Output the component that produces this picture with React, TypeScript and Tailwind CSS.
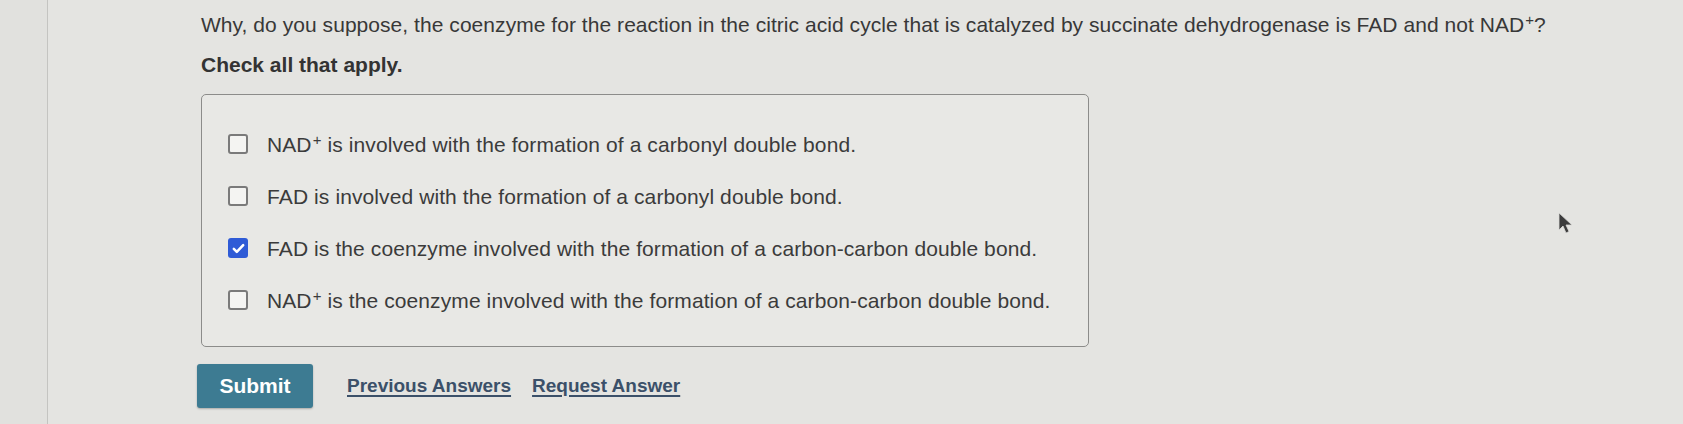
const font = { fontFamily: '"Liberation Sans", Arial, sans-serif' }

const options = [
  { id: 1, nad: true, text: ' is involved with the formation of a carbonyl double bond.', checked: false },
  { id: 2, nad: false, text: 'FAD is involved with the formation of a carbonyl double bond.', checked: false },
  { id: 3, nad: false, text: 'FAD is the coenzyme involved with the formation of a carbon-carbon double bond.', checked: true },
  { id: 4, nad: true, text: ' is the coenzyme involved with the formation of a carbon-carbon double bond.', checked: false }
]

function Nad() {
  return (
    <>
      NAD<sup className="ml-[1px] text-[15px]">+</sup>
    </>
  )
}

function Checkbox({ checked }: { checked: boolean }) {
  if (checked) {
    return (
      <span className="mt-[1px] flex size-[20px] shrink-0 items-center justify-center rounded-[3px] bg-[#2f5bd6]">
        <svg viewBox="0 0 20 20" className="size-[17px]" fill="none">
          <path d="M4.5 10.5l3.5 3.5 7.5-8" stroke="white" strokeWidth="3" strokeLinecap="round" strokeLinejoin="round" />
        </svg>
      </span>
    )
  }
  return <span className="mt-[1px] block size-[20px] shrink-0 rounded-[3px] border-2 border-[#7a7a7a] bg-[#f4f4f2]" />
}

export default function App() {
  return (
    <div className="relative flex h-[424px] w-[1683px] overflow-hidden bg-[#e4e4e1] text-[#383838]" style={font}>
      <div className="w-[48px] shrink-0 border-r border-[#c4c4c1] bg-[#e1e1de]" />

      <div className="flex flex-col pl-[153px] pt-[13px]">
        <p className="text-[21px] leading-[24px] tracking-[0.05px]">
          Why, do you suppose, the coenzyme for the reaction in the citric acid cycle that is catalyzed by succinate
          dehydrogenase is FAD and not <Nad />?
        </p>
        <p className="mt-[16px] text-[21px] font-bold leading-[24px] text-[#333]">Check all that apply.</p>

        <div className="mt-[17px] flex w-[888px] flex-col gap-[28px] rounded-[5px] border border-[#8c8c8a] bg-[#e8e8e5] pb-[33px] pl-[26px] pt-[38px]">
          {options.map((item) => (
            <label key={item.id} className="flex items-start gap-[19px] text-[21px] leading-[24px] tracking-[0.1px] text-[#3b3b3b]">
              <Checkbox checked={item.checked} />
              <span>
                {item.nad && <Nad />}
                {item.text}
              </span>
            </label>
          ))}
        </div>

        <div className="-ml-[4px] mt-[17px] flex items-center">
          <button className="flex h-[44px] w-[116px] items-center justify-center rounded-[3px] bg-[#3d7b92] text-[21px] font-bold text-white shadow-[0_1px_2px_rgba(0,0,0,0.25)]">
            Submit
          </button>
          <a className="ml-[34px] text-[19px] font-bold text-[#3b5069] underline decoration-[1.5px] underline-offset-[3px]">
            Previous Answers
          </a>
          <a className="ml-[21px] text-[19px] font-bold text-[#3b5069] underline decoration-[1.5px] underline-offset-[3px]">
            Request Answer
          </a>
        </div>
      </div>

      <svg viewBox="0 0 14 22" className="absolute left-[1558px] top-[212px] h-[22px] w-[14px] blur-[0.6px]">
        <path d="M1 1v17l4-4 3 7 3-1.5-3-6.5h6z" fill="#3c3c3c" stroke="#d8d8d5" strokeWidth="0.8" />
      </svg>
    </div>
  )
}
